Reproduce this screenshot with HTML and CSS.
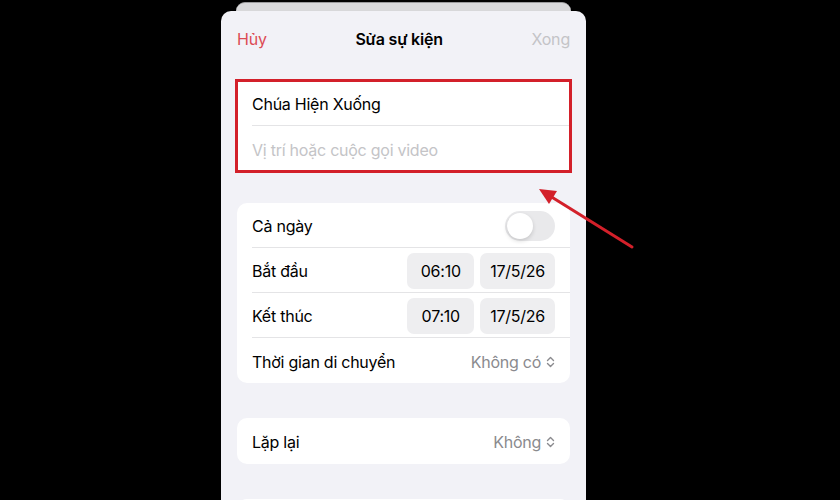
FILE: index.html
```html
<!DOCTYPE html>
<html lang="vi">
  <head>
    <meta charset="UTF-8" />
    <meta name="viewport" content="width=device-width, initial-scale=1.0" />
    <title>Sửa sự kiện</title>
    <link rel="stylesheet" href="styles.css">
  </head>
  <body>
    <div class="phone">
      <div class="sheet-behind"></div>
      <div class="sheet">
        <div class="nav">
          <span class="nav-cancel">Hủy</span>
          <span class="nav-title">Sửa sự kiện</span>
          <span class="nav-done">Xong</span>
        </div>

        <div class="card highlight">
          <div class="row">
            <span class="label">Chúa Hiện Xuống</span>
          </div>
          <div class="row">
            <span class="placeholder">Vị trí hoặc cuộc gọi video</span>
          </div>
        </div>

        <div class="card">
          <div class="row">
            <span class="label">Cả ngày</span>
            <span class="toggle"><span class="knob"></span></span>
          </div>
          <div class="row">
            <span class="label">Bắt đầu</span>
            <div class="pills">
              <span class="pill">06:10</span>
              <span class="pill">17/5/26</span>
            </div>
          </div>
          <div class="row">
            <span class="label">Kết thúc</span>
            <div class="pills">
              <span class="pill">07:10</span>
              <span class="pill">17/5/26</span>
            </div>
          </div>
          <div class="row">
            <span class="label">Thời gian di chuyển</span>
            <span class="value">Không có
              <svg class="updown" width="9" height="12" viewBox="0 0 9 12">
                <path d="M1.5 4.5 L4.5 1.5 L7.5 4.5 M1.5 7.5 L4.5 10.5 L7.5 7.5" />
              </svg>
            </span>
          </div>
        </div>

        <div class="card">
          <div class="row tall">
            <span class="label">Lặp lại</span>
            <span class="value">Không
              <svg class="updown" width="9" height="12" viewBox="0 0 9 12">
                <path d="M1.5 4.5 L4.5 1.5 L7.5 4.5 M1.5 7.5 L4.5 10.5 L7.5 7.5" />
              </svg>
            </span>
          </div>
        </div>

        <div class="card">
          <div class="row tall"></div>
        </div>
      </div>
    </div>

    <!-- pointer arrow drawn over the page -->
    <svg class="pointer" width="840" height="500" viewBox="0 0 840 500">
      <line x1="632" y1="247" x2="550" y2="196" />
      <path d="M539 189 L557 191 L549 204 Z" />
    </svg>
  </body>
</html>
```

FILE: styles.css
```css
body {
  margin: 0;
  padding: 0;
  background-color: #000000;
  font-family: Inter, "Noto Sans", sans-serif;
  height: 500px;
  overflow: hidden;
}
.phone {
  width: 365px;
  margin-left: 221px;
}
.sheet-behind {
  height: 8px;
  margin: 2px 15px 0;
  background: #d8d8da;
  border-top: 1px solid #9a9a9c;
  border-radius: 10px 10px 0 0;
}
.sheet {
  background: #f2f2f7;
  border-radius: 10px 10px 0 0;
  padding: 0 16px;
  height: 489px;
  box-sizing: border-box;
  overflow: hidden;
}
.nav {
  display: flex;
  justify-content: space-between;
  align-items: center;
  height: 56px;
  font-size: 16px;
  letter-spacing: -0.2px;
}
.nav-cancel {
  color: #dc4b55;
}
.nav-title {
  font-weight: 600;
  color: #000000;
}
.nav-done {
  color: #c4c4c7;
}
.card {
  background: #ffffff;
  border-radius: 10px;
  margin-top: 13px;
  margin-bottom: 35px;
}
.card.highlight {
  outline: 3px solid #d3202a;
  outline-offset: -1px;
  border-radius: 0;
  margin-top: 14px;
  margin-bottom: 32px;
}
.row {
  display: flex;
  justify-content: space-between;
  align-items: center;
  min-height: 45px;
  margin-left: 15px;
  padding-right: 15px;
  padding-top: 2px;
  box-sizing: border-box;
  border-bottom: 1px solid #e4e4e6;
  font-size: 16px;
  letter-spacing: -0.25px;
}
.row:last-child {
  border-bottom: none;
}
.row.tall {
  min-height: 46px;
}
.label {
  color: #000000;
}
.placeholder {
  color: #c4c4c7;
}
.value {
  color: #8a8a8e;
  display: flex;
  align-items: center;
  gap: 5px;
}
.updown {
  fill: none;
  stroke: #8a8a8e;
  stroke-width: 1.4;
  stroke-linecap: round;
  stroke-linejoin: round;
}
.toggle {
  width: 50px;
  height: 30px;
  border-radius: 15px;
  background: #e9e9eb;
  display: flex;
  align-items: center;
  padding: 2px;
  box-sizing: border-box;
}
.knob {
  width: 26px;
  height: 26px;
  border-radius: 50%;
  background: #ffffff;
  box-shadow: 0 2px 4px rgba(0, 0, 0, 0.15);
}
.pills {
  display: flex;
  gap: 6px;
}
.pill {
  background: #eeeef0;
  border-radius: 7px;
  padding: 0 10px;
  height: 36px;
  display: flex;
  align-items: center;
  justify-content: center;
  min-width: 47px;
}
.pointer {
  position: absolute;
  left: 0;
  top: 0;
  pointer-events: none;
}
.pointer line {
  stroke: #d3202a;
  stroke-width: 3;
  stroke-linecap: round;
}
.pointer path {
  fill: #d3202a;
}
```
